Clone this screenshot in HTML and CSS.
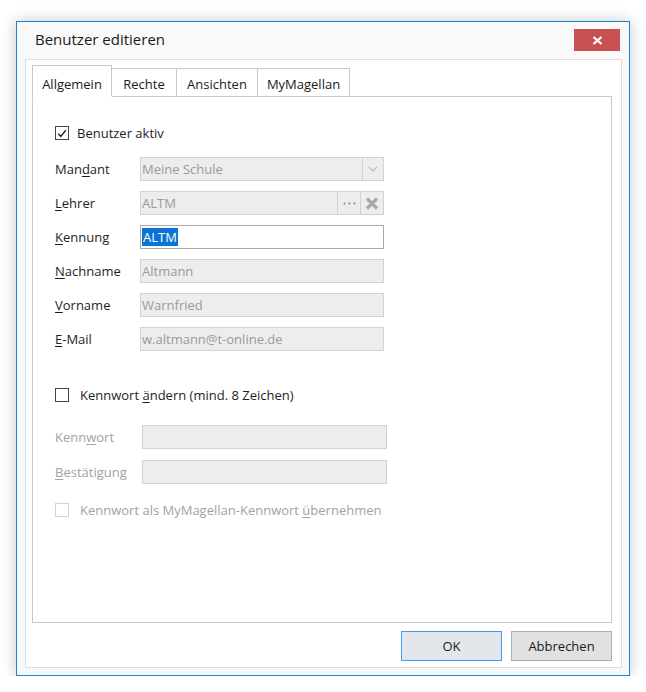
FILE: index.html
```html
<!DOCTYPE html>
<html lang="de">
<head>
<meta charset="utf-8">
<title>Benutzer editieren</title>
<link rel="stylesheet" href="styles.css">
</head>
<body>
<div class="window">
  <div class="titlebar">
    <span class="title">Benutzer editieren</span>
    <div class="close"><svg width="11" height="9" viewBox="0 0 11 9"><path d="M1.5 1 L9.5 8 M9.5 1 L1.5 8" stroke="#fff" stroke-width="2.2" fill="none"/></svg></div>
  </div>
  <div class="client">
    <div class="tabs">
      <div class="tab active t1">Allgemein</div>
      <div class="tab t2">Rechte</div>
      <div class="tab t3">Ansichten</div>
      <div class="tab t4">MyMagellan</div>
    </div>
    <div class="page">
      <div class="check-row first">
        <span class="cb"><svg width="13" height="13" viewBox="0 0 13 13"><path d="M2.5 6.8 L5.2 9.6 L10.6 3" stroke="#222" stroke-width="1.6" fill="none"/></svg></span>
        <span>Benutzer aktiv</span>
      </div>
      <div class="form">
        <div class="row"><span class="lbl">Man<u>d</u>ant</span>
          <div class="field disabled"><span class="val">Meine Schule</span><span class="cell drop"><svg width="10" height="6" viewBox="0 0 10 6"><path d="M1 1 L5 5 L9 1" stroke="#bdbdbd" stroke-width="1.2" fill="none"/></svg></span></div></div>
        <div class="row"><span class="lbl"><u>L</u>ehrer</span>
          <div class="field disabled"><span class="val">ALTM</span><span class="cell dots"><svg width="13" height="3" viewBox="0 0 13 3"><circle cx="1.5" cy="1.5" r="1.1" fill="#8a8a8a"/><circle cx="6.5" cy="1.5" r="1.1" fill="#8a8a8a"/><circle cx="11.5" cy="1.5" r="1.1" fill="#8a8a8a"/></svg></span><span class="cell del"><svg width="14" height="13" viewBox="0 0 14 13"><path d="M2 1.5 L12 11.5 M12 1.5 L2 11.5" stroke="#a9a9a9" stroke-width="3.2" fill="none"/></svg></span></div></div>
        <div class="row"><span class="lbl"><u>K</u>ennung</span>
          <div class="field active"><span class="val"><span class="sel">ALTM</span></span></div></div>
        <div class="row"><span class="lbl"><u>N</u>achname</span>
          <div class="field disabled"><span class="val">Altmann</span></div></div>
        <div class="row"><span class="lbl"><u>V</u>orname</span>
          <div class="field disabled"><span class="val">Warnfried</span></div></div>
        <div class="row"><span class="lbl"><u>E</u>-Mail</span>
          <div class="field disabled"><span class="val">w.altmann@t-online.de</span></div></div>
      </div>
      <div class="check-row second">
        <span class="cb"></span>
        <span>Kennwort <u>ä</u>ndern (mind. 8 Zeichen)</span>
      </div>
      <div class="form pw">
        <div class="row"><span class="lbl dim">Kenn<u>w</u>ort</span>
          <div class="field disabled"></div></div>
        <div class="row"><span class="lbl dim"><u>B</u>estätigung</span>
          <div class="field disabled"></div></div>
      </div>
      <div class="check-row third dim">
        <span class="cb off"></span>
        <span>Kennwort als MyMagellan-Kennwort <u>ü</u>bernehmen</span>
      </div>
    </div>
    <div class="footer">
      <button class="btn default">OK</button>
      <button class="btn">Abbrechen</button>
    </div>
  </div>
</div>
</body>
</html>
```

FILE: styles.css
```css
* { box-sizing: border-box; }
html, body { margin: 0; padding: 0; background: #ffffff; }
body {
  font-family: "Open Sans", "Noto Sans", "DejaVu Sans", sans-serif;
  font-size: 13px;
  color: #1e1e1e;
}
.window {
  margin: 21px 0 0 16px;
  width: 614px;
  height: 655px;
  border: 1px solid #1c83d4;
  background: #f9f9f9;
  box-shadow: 0 0 14px rgba(0,0,0,0.22);
  display: flex;
  flex-direction: column;
}
.titlebar {
  height: 37px;
  flex: none;
  display: flex;
  align-items: flex-start;
  justify-content: space-between;
  padding: 0 9px 0 18px;
}
.title {
  font-size: 15px;
  color: #1a1a1a;
  margin-top: 7px;
}
.close {
  margin-top: 7px;
  width: 46px;
  height: 22px;
  background: #c75050;
  display: flex;
  align-items: center;
  justify-content: center;
}
.client {
  flex: 1;
  margin: 0 7px 7px 8px;
  border: 1px solid #dcdcdc;
  background: #ffffff;
  padding: 5px 9px 6px 6px;
  display: flex;
  flex-direction: column;
}
.tabs {
  display: flex;
  align-items: flex-end;
  height: 32px;
  flex: none;
  margin-bottom: -1px;
  position: relative;
  z-index: 1;
}
.tab {
  height: 29px;
  border: 1px solid #c9c9c9;
  background: #ffffff;
  display: flex;
  align-items: center;
  justify-content: center;
  padding-top: 3px;
  margin-left: -1px;
  color: #1a1a1a;
}
.tab.active {
  height: 32px;
  padding-top: 6px;
  border-bottom-color: #ffffff;
  margin-left: 0;
  position: relative;
  z-index: 2;
}
.t1 { width: 80px; }
.t2 { width: 66px; }
.t3 { width: 82px; }
.t4 { width: 93px; }
.page {
  flex: 1;
  border: 1px solid #c9c9c9;
  background: #ffffff;
  padding-left: 22px;
  display: flex;
  flex-direction: column;
}
.check-row {
  height: 18px;
  display: flex;
  align-items: center;
  gap: 8px;
}
.check-row.first { margin-top: 27px; gap: 8px; }
.check-row.second { margin-top: 35px; gap: 11px; }
.check-row.third { margin-top: 17px; gap: 11px; }
.cb {
  width: 14px;
  height: 14px;
  border: 1px solid #444444;
  background: #fff;
  display: flex;
  align-items: center;
  justify-content: center;
  flex: none;
}
.cb.off { border-color: #d2d2d2; }
.dim { color: #a2a2a2; }
.form {
  margin-top: 15px;
  display: flex;
  flex-direction: column;
  gap: 10px;
}
.row {
  display: flex;
  align-items: center;
  height: 24px;
}
.lbl {
  width: 85px;
  flex: none;
}
.form.pw { margin-top: 21px; gap: 11px; }
.form.pw .lbl { width: 87px; }
.form.pw .field { width: 245px; }
.field {
  width: 244px;
  height: 24px;
  border: 1px solid #d2d2d2;
  background: #ededed;
  display: flex;
  align-items: stretch;
}
.field .val {
  flex: 1;
  display: flex;
  align-items: center;
  padding-left: 1px;
  color: #9a9a9a;
}
.field.active {
  background: #ffffff;
  border-color: #a9a9a9;
}
.sel {
  background: #0a74d6;
  color: #ffffff;
  padding: 0 1px;
  line-height: 18px;
}
.cell {
  border-left: 1px solid #d2d2d2;
  display: flex;
  align-items: center;
  justify-content: center;
}
.drop { width: 21px; }
.dots { width: 23px; }
.del { width: 23px; }
u { text-decoration-thickness: 1px; text-underline-offset: 2px; }
.footer {
  flex: none;
  display: flex;
  justify-content: flex-end;
  gap: 9px;
  margin-top: 8px;
}
.btn {
  width: 101px;
  height: 30px;
  font-family: inherit;
  font-size: 13px;
  color: #1a1a1a;
  background: #e1e1e1;
  border: 1px solid #adadad;
  padding: 0;
  margin: 0;
}
.btn.default {
  border-color: #3d9cf0;
  background: #e3e6ea;
}
```
